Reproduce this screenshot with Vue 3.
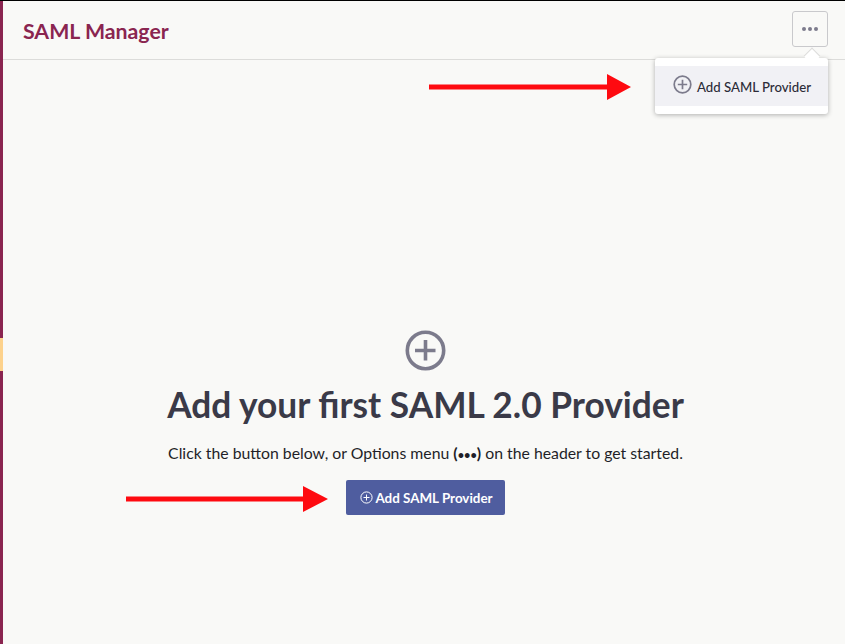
<template>
    <div class="page">
        <div class="rail">
            <div class="rail-mark"></div>
        </div>
        <div class="main">
            <header class="header">
                <h1>SAML Manager</h1>
                <button class="options" type="button" aria-label="Options">
                    <span></span><span></span><span></span>
                </button>
                <div class="menu">
                    <div class="menu-item">
                        <svg width="19" height="19" viewBox="0 0 19 19" fill="none" stroke="#7c7b8c" stroke-width="1.7">
                            <circle cx="9.5" cy="9.5" r="8.3" />
                            <path d="M9.5 4.8v9.4M4.8 9.5h9.4" />
                        </svg>
                        <span>Add SAML Provider</span>
                    </div>
                </div>
            </header>
            <section class="empty">
                <svg class="empty-icon" width="41" height="41" viewBox="0 0 41 41" fill="none" stroke="#7c7b8c" stroke-width="3.6">
                    <circle cx="20.5" cy="20.5" r="18.2" />
                    <path d="M20.5 10v20.5M10 20.5h20.5" />
                </svg>
                <h2>Add your first SAML 2.0 Provider</h2>
                <p>Click the button below, or Options menu <b>(<span class="dots">•••</span>)</b> on the header to get started.</p>
                <button class="add" type="button">
                    <svg width="13" height="13" viewBox="0 0 13 13" fill="none" stroke="#fff" stroke-width="1">
                        <circle cx="6.5" cy="6.5" r="5.6" />
                        <path d="M6.5 3.5v6M3.5 6.5h6" />
                    </svg>
                    Add SAML Provider
                </button>
            </section>
        </div>

        <svg class="arrow arrow-top" width="204" height="26" viewBox="0 0 204 26">
            <path d="M0 10.5h178V0l24 13-24 13V15.5H0z" fill="#fe0a10" />
        </svg>
        <svg class="arrow arrow-bottom" width="204" height="26" viewBox="0 0 204 26">
            <path d="M0 10.5h177V0l25 13-25 13V15.5H0z" fill="#fe0a10" />
        </svg>
    </div>
</template>

<script setup>
</script>

<style>
html,
body {
    margin: 0;
    background: #f9f9f7;
}
</style>

<style scoped>
.page {
    position: relative;
    display: flex;
    height: 644px;
    overflow: hidden;
    border-top: 1px solid #000;
    box-sizing: border-box;
    background: #f9f9f7;
    font-family: Lato, sans-serif;
    color: #3a3a48;
}

.rail {
    width: 3px;
    padding-top: 337px;
    background: #8a2550;
    box-sizing: border-box;
}

.rail-mark {
    height: 33px;
    background: #fdd28c;
}

.main {
    flex: 1;
    min-width: 0;
}

.header {
    position: relative;
    display: flex;
    align-items: center;
    justify-content: space-between;
    height: 58px;
    padding: 0 17px 0 20px;
    border-bottom: 1px solid #dcdcda;
}

h1 {
    margin: 0;
    padding-top: 2px;
    font-size: 21.3px;
    font-weight: 700;
    color: #8a2550;
}

.options {
    display: flex;
    align-items: center;
    justify-content: center;
    gap: 2px;
    width: 36px;
    height: 36px;
    margin-top: -3px;
    padding: 0;
    border: 1px solid #c9c9cc;
    border-radius: 3px;
    background: #f9f9f7;
}

.options span {
    width: 4px;
    height: 4px;
    border-radius: 50%;
    background: #7c7b8c;
}

.menu {
    position: absolute;
    top: 57px;
    right: 17px;
    width: 173px;
    padding: 8px 0;
    border-radius: 3px;
    background: #fff;
    box-shadow: 0 1px 5px rgba(0, 0, 0, 0.3);
}

.menu::before {
    content: "";
    position: absolute;
    top: -8px;
    right: 10px;
    width: 11px;
    height: 11px;
    background: #fff;
    border-top: 1px solid #dcdcda;
    border-left: 1px solid #dcdcda;
    transform: rotate(45deg);
}

.menu-item {
    position: relative;
    display: flex;
    align-items: center;
    gap: 5px;
    height: 40px;
    padding-left: 18px;
    background: #f1f1f5;
    font-size: 13.2px;
    color: #2c2c38;
}

.menu-item svg {
    margin-top: -3px;
}

.menu-item span {
    padding-top: 2px;
    font-weight: 500;
}

.empty {
    display: flex;
    flex-direction: column;
    align-items: center;
    padding: 270px 0 0 3px;
}

.empty-icon {
    display: block;
}

h2 {
    margin: 11px 0 0;
    font-size: 35.3px;
    line-height: 46px;
    font-weight: 700;
}

p {
    margin: 15px 0 0;
    font-size: 15.8px;
    line-height: 20px;
    color: #1f1f28;
}

.dots {
    font-size: 11px;
}

.add {
    display: flex;
    align-items: center;
    gap: 2px;
    height: 35px;
    margin-top: 15px;
    padding: 0 12px 0 14px;
    border: 0;
    border-radius: 2px;
    background: #4f5d9f;
    color: #fff;
    font-family: inherit;
    font-size: 13.4px;
    font-weight: 700;
}

.arrow {
    position: absolute;
}

.arrow-top {
    top: 73px;
    left: 429px;
}

.arrow-bottom {
    top: 485px;
    left: 126px;
}
</style>
